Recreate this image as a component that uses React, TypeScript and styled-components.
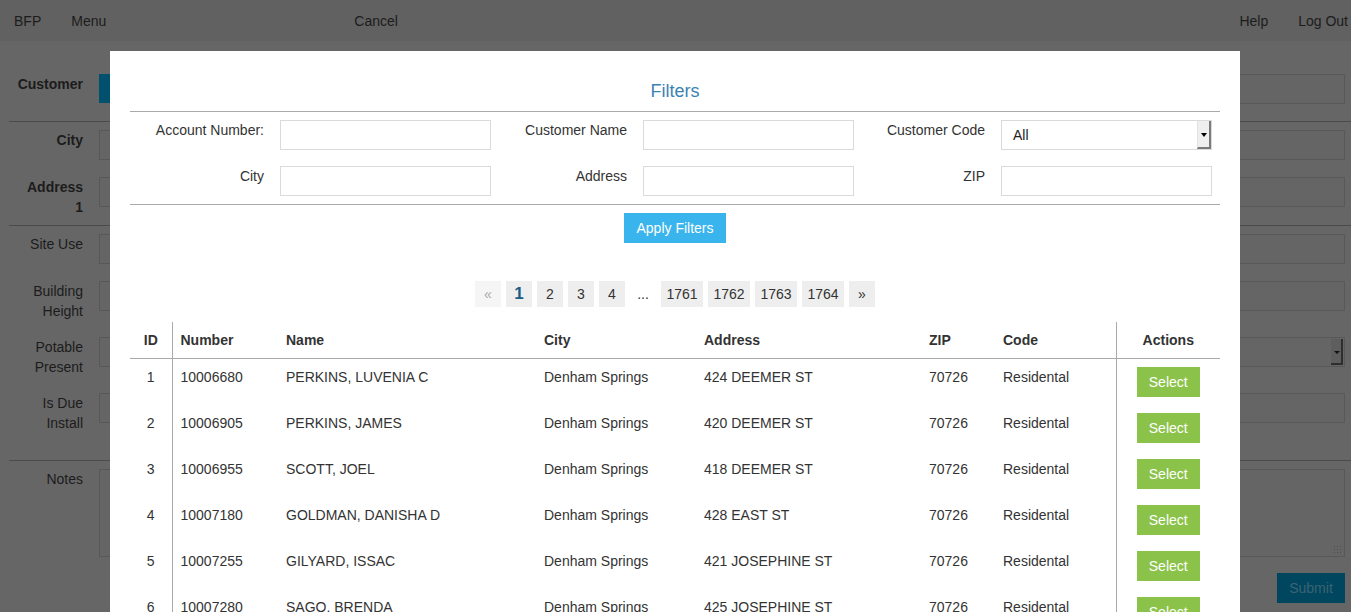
import React from "react";
import styled, { createGlobalStyle } from "styled-components";

const GlobalStyle = createGlobalStyle`
  html, body { margin: 0; padding: 0; overflow: hidden; }
  body {
    font-family: "Liberation Sans", Arial, Helvetica, sans-serif;
    font-size: 14px;
    color: #333;
  }
  * { box-sizing: border-box; }
`;

/* ---------- dimmed background page ---------- */

const Page = styled.div`
  min-height: 100vh;
  background: #666666;
  color: #1c1c1c;
`;

const NavBar = styled.nav`
  height: 41px;
  background: #616161;
  display: flex;
  align-items: center;
  padding: 0 3px 0 14px;
`;

const NavItem = styled.span<{ $gap?: number; $auto?: boolean }>`
  line-height: 20px;
  margin-left: ${(p) => (p.$auto ? "auto" : `${p.$gap ?? 0}px`)};
`;

const Form = styled.div`
  padding: 33px 0 0 9px;
`;

const Section = styled.div<{ $pt: number; $pb: number; $line?: boolean }>`
  padding: ${(p) => p.$pt}px 6px ${(p) => p.$pb}px 0;
  border-bottom: ${(p) => (p.$line ? "1px solid #4b4b4b" : "none")};
  display: flex;
  flex-direction: column;
  gap: 16px;
`;

const FormRow = styled.div`
  display: grid;
  grid-template-columns: 74px 1fr;
  column-gap: 16px;
  min-height: 31px;
  align-items: start;
`;

const FormLabel = styled.label<{ $bold?: boolean }>`
  text-align: right;
  line-height: 20px;
  padding-left: 7px;
  font-weight: ${(p) => (p.$bold ? 700 : 400)};
  color: #1c1c1c;
`;

const DimInput = styled.div<{ $h?: number }>`
  height: ${(p) => p.$h ?? 30}px;
  border: 1px solid #585858;
  background: #656565;
  position: relative;
`;

const CustomerControls = styled.div`
  display: flex;
  gap: 10px;
`;

const TealButton = styled.div`
  width: 110px;
  height: 29px;
  background: #00506e;
`;

const DimArrow = styled.span`
  position: absolute;
  right: 1px;
  top: 1px;
  bottom: 1px;
  width: 12px;
  background: #5e5e5e;
  border-right: 2px solid #2e2e2e;
  border-bottom: 2px solid #2e2e2e;
  &::after {
    content: "";
    position: absolute;
    left: 3px;
    top: 12px;
    border-left: 3px solid transparent;
    border-right: 3px solid transparent;
    border-top: 3px solid #111;
  }
`;

const Grip = styled.span`
  position: absolute;
  right: 3px;
  bottom: 3px;
  width: 8px;
  height: 8px;
  background-image: radial-gradient(#4e4e4e 0.8px, transparent 1px);
  background-size: 3px 3px;
`;

const SubmitRow = styled.div`
  display: flex;
  justify-content: flex-end;
  padding: 16px 6px 0 0;
`;

const SubmitButton = styled.div`
  width: 68px;
  height: 30px;
  background: #00465f;
  color: #3b6373;
  display: flex;
  align-items: center;
  justify-content: center;
  font-size: 14px;
`;

/* ---------- modal ---------- */

const Modal = styled.div`
  position: fixed;
  left: 110px;
  top: 51px;
  width: 1130px;
  height: 700px;
  background: #fff;
  padding: 0 20px;
`;

const Title = styled.h4`
  margin: 0;
  padding: 30px 0 10px;
  text-align: center;
  font-size: 18px;
  line-height: 20px;
  font-weight: 400;
  color: #3b83b3;
  border-bottom: 1px solid #a9a9a9;
`;

const FilterGrid = styled.div`
  display: grid;
  grid-template-columns: 150px 211px 152px 211px 147px 211px;
  row-gap: 16px;
  padding: 8px 0;
  border-bottom: 1px solid #a9a9a9;
`;

const FilterLabel = styled.label`
  text-align: right;
  padding-right: 16px;
  line-height: 20px;
  color: #333;
`;

const TextInput = styled.input`
  height: 30px;
  width: 100%;
  border: 1px solid #dadada;
  padding: 0 10px;
  font: inherit;
  outline: none;
`;

const SelectBox = styled.div`
  height: 30px;
  border: 1px solid #dadada;
  position: relative;
  display: flex;
  align-items: center;
  padding: 0 11px;
  color: #222;
  line-height: 20px;
`;

const SelectArrow = styled.span`
  position: absolute;
  right: 0;
  top: 0;
  bottom: 0;
  width: 14px;
  background: #efefef;
  border-left: 1px solid #e2e2e2;
  border-right: 2px solid #7a7a7a;
  border-bottom: 2px solid #7a7a7a;
  &::after {
    content: "";
    position: absolute;
    left: 3px;
    top: 12px;
    border-left: 3px solid transparent;
    border-right: 3px solid transparent;
    border-top: 4px solid #000;
  }
`;

const ApplyRow = styled.div`
  display: flex;
  justify-content: center;
  padding-top: 8px;
`;

const ApplyButton = styled.button`
  width: 102px;
  height: 30px;
  border: none;
  background: #3ab4ec;
  color: #fff;
  font: inherit;
  padding: 0;
`;

const Pager = styled.div`
  display: flex;
  justify-content: center;
  gap: 5px;
  margin-top: 38px;
`;

const PageItem = styled.span<{ $wide?: boolean; $kind?: "active" | "disabled" | "gap" | "normal" }>`
  min-width: ${(p) => (p.$wide ? 42 : 26)}px;
  height: 26px;
  display: flex;
  align-items: center;
  justify-content: center;
  background: ${(p) =>
    p.$kind === "gap" ? "transparent" : p.$kind === "disabled" ? "#f5f5f5" : "#eeeeee"};
  color: ${(p) =>
    p.$kind === "active" ? "#1f5a84" : p.$kind === "disabled" ? "#aaa" : "#333"};
  font-weight: ${(p) => (p.$kind === "active" ? 700 : 400)};
  font-size: ${(p) => (p.$kind === "active" ? 17 : 14)}px;
`;

const Table = styled.table`
  margin-top: 15px;
  width: 1090px;
  border-collapse: collapse;
  table-layout: fixed;
`;

const Th = styled.th<{ $center?: boolean; $divRight?: boolean; $divLeft?: boolean }>`
  text-align: ${(p) => (p.$center ? "center" : "left")};
  font-weight: 700;
  line-height: 20px;
  padding: 8px;
  border-bottom: 1px solid #a9a9a9;
  border-right: ${(p) => (p.$divRight ? "1px solid #a9a9a9" : "none")};
  border-left: ${(p) => (p.$divLeft ? "1px solid #a9a9a9" : "none")};
  color: #333;
`;

const Td = styled.td<{ $center?: boolean; $divRight?: boolean; $divLeft?: boolean }>`
  text-align: ${(p) => (p.$center ? "center" : "left")};
  vertical-align: top;
  line-height: 20px;
  padding: 8px;
  border-right: ${(p) => (p.$divRight ? "1px solid #a9a9a9" : "none")};
  border-left: ${(p) => (p.$divLeft ? "1px solid #a9a9a9" : "none")};
  color: #333;
  white-space: nowrap;
`;

const SelectButton = styled.button`
  width: 63px;
  height: 30px;
  border: none;
  background: #8bc34a;
  color: #fff;
  font: inherit;
  padding: 0;
  display: inline-block;
`;

const rows = [
  ["1", "10006680", "PERKINS, LUVENIA C", "424 DEEMER ST"],
  ["2", "10006905", "PERKINS, JAMES", "420 DEEMER ST"],
  ["3", "10006955", "SCOTT, JOEL", "418 DEEMER ST"],
  ["4", "10007180", "GOLDMAN, DANISHA D", "428 EAST ST"],
  ["5", "10007255", "GILYARD, ISSAC", "421 JOSEPHINE ST"],
  ["6", "10007280", "SAGO, BRENDA", "425 JOSEPHINE ST"],
];

const colWidths = [42, 106, 258, 160, 225, 74, 121, 104];

export default function App() {
  return (
    <>
      <GlobalStyle />
      <Page>
        <NavBar>
          <NavItem>BFP</NavItem>
          <NavItem $gap={30}>Menu</NavItem>
          <NavItem $gap={248}>Cancel</NavItem>
          <NavItem $auto>Help</NavItem>
          <NavItem $gap={30}>Log Out</NavItem>
        </NavBar>
        <Form>
          <Section $pt={0} $pb={16} $line>
            <FormRow>
              <FormLabel $bold>Customer</FormLabel>
              <CustomerControls>
                <TealButton />
                <DimInput style={{ flex: 1 }} $h={30} />
              </CustomerControls>
            </FormRow>
          </Section>
          <Section $pt={8} $pb={8} $line>
            <FormRow>
              <FormLabel $bold>City</FormLabel>
              <DimInput />
            </FormRow>
            <FormRow>
              <FormLabel $bold>Address 1</FormLabel>
              <DimInput />
            </FormRow>
          </Section>
          <Section $pt={8} $pb={27} $line>
            <FormRow>
              <FormLabel>Site Use</FormLabel>
              <DimInput />
            </FormRow>
            <FormRow>
              <FormLabel>Building Height</FormLabel>
              <DimInput />
            </FormRow>
            <FormRow>
              <FormLabel>Potable Present</FormLabel>
              <DimInput>
                <DimArrow />
              </DimInput>
            </FormRow>
            <FormRow>
              <FormLabel>Is Due Install</FormLabel>
              <DimInput />
            </FormRow>
          </Section>
          <Section $pt={8} $pb={0}>
            <FormRow>
              <FormLabel>Notes</FormLabel>
              <DimInput $h={88}>
                <Grip />
              </DimInput>
            </FormRow>
          </Section>
          <SubmitRow>
            <SubmitButton>Submit</SubmitButton>
          </SubmitRow>
        </Form>
      </Page>

      <Modal>
        <Title>Filters</Title>
        <FilterGrid>
          <FilterLabel>Account Number:</FilterLabel>
          <TextInput />
          <FilterLabel>Customer Name</FilterLabel>
          <TextInput />
          <FilterLabel>Customer Code</FilterLabel>
          <SelectBox>
            All
            <SelectArrow />
          </SelectBox>
          <FilterLabel>City</FilterLabel>
          <TextInput />
          <FilterLabel>Address</FilterLabel>
          <TextInput />
          <FilterLabel>ZIP</FilterLabel>
          <TextInput />
        </FilterGrid>
        <ApplyRow>
          <ApplyButton>Apply Filters</ApplyButton>
        </ApplyRow>
        <Pager>
          <PageItem $kind="disabled">«</PageItem>
          <PageItem $kind="active">1</PageItem>
          <PageItem>2</PageItem>
          <PageItem>3</PageItem>
          <PageItem>4</PageItem>
          <PageItem $kind="gap">...</PageItem>
          <PageItem $wide>1761</PageItem>
          <PageItem $wide>1762</PageItem>
          <PageItem $wide>1763</PageItem>
          <PageItem $wide>1764</PageItem>
          <PageItem>»</PageItem>
        </Pager>
        <Table>
          <colgroup>
            {colWidths.map((w, i) => (
              <col key={i} style={{ width: w }} />
            ))}
          </colgroup>
          <thead>
            <tr>
              <Th $center $divRight>ID</Th>
              <Th>Number</Th>
              <Th>Name</Th>
              <Th>City</Th>
              <Th>Address</Th>
              <Th>ZIP</Th>
              <Th>Code</Th>
              <Th $center $divLeft>Actions</Th>
            </tr>
          </thead>
          <tbody>
            {rows.map((r) => (
              <tr key={r[0]}>
                <Td $center $divRight>{r[0]}</Td>
                <Td>{r[1]}</Td>
                <Td>{r[2]}</Td>
                <Td>Denham Springs</Td>
                <Td>{r[3]}</Td>
                <Td>70726</Td>
                <Td>Residental</Td>
                <Td $center $divLeft>
                  <SelectButton>Select</SelectButton>
                </Td>
              </tr>
            ))}
          </tbody>
        </Table>
      </Modal>
    </>
  );
}
